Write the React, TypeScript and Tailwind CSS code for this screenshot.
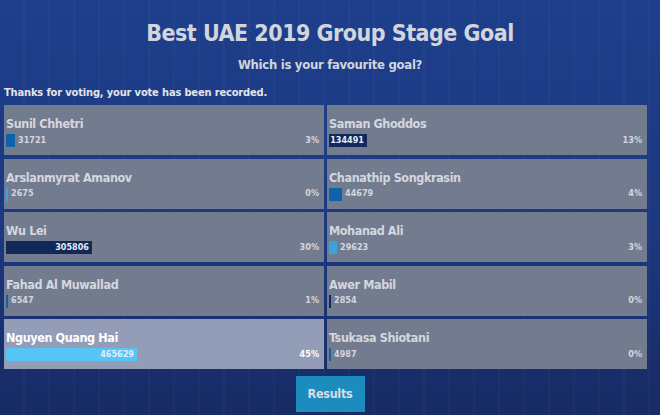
const FONT = { fontFamily: '"DejaVu Sans Condensed", "DejaVu Sans", sans-serif', fontStretch: "condensed" } as const;

type Entry = { name: string; votes: number; color: string; active?: boolean };

const left: Entry[] = [
  { name: "Sunil Chhetri", votes: 31721, color: "bg-[#0c63a6]" },
  { name: "Arslanmyrat Amanov", votes: 2675, color: "bg-[#3aa3dc]" },
  { name: "Wu Lei", votes: 305806, color: "bg-[#10295a]" },
  { name: "Fahad Al Muwallad", votes: 6547, color: "bg-[#0c63a6]" },
  { name: "Nguyen Quang Hai", votes: 465629, color: "bg-[#55c6f5]", active: true },
];

const right: Entry[] = [
  { name: "Saman Ghoddos", votes: 134491, color: "bg-[#10295a]" },
  { name: "Chanathip Songkrasin", votes: 44679, color: "bg-[#0c63a6]" },
  { name: "Mohanad Ali", votes: 29623, color: "bg-[#3aa3dc]" },
  { name: "Awer Mabil", votes: 2854, color: "bg-[#10295a]" },
  { name: "Tsukasa Shiotani", votes: 4987, color: "bg-[#0c63a6]" },
];

const total = [...left, ...right].reduce((s, e) => s + e.votes, 0);
const TRACK = 290;

function Card({ e }: { e: Entry }) {
  const pct = e.votes / total;
  const w = Math.max(2, Math.round(pct * TRACK));
  const inside = w > 34;
  return (
    <div
      className={`h-[50px] px-[2px] pt-[11px] ${
        e.active ? "bg-[#949db7] text-white" : "bg-[#737b8f] text-[#d3d7df]"
      }`}
    >
      <div className="text-[12.5px] font-bold leading-4 tracking-[-0.4px]">{e.name}</div>
      <div className="mt-[2px] flex h-[13px] items-center pr-[3px]">
        <div
          className={`flex h-[13px] shrink-0 items-center justify-end ${e.color}`}
          style={{ width: w }}
        >
          {inside && (
            <span className="pr-[3px] text-[9px] font-bold text-[#e6ecf4]">{e.votes}</span>
          )}
        </div>
        {!inside && <span className="pl-[3px] text-[9px] font-bold">{e.votes}</span>}
        <span className="ml-auto text-[9px] font-bold">{Math.round(pct * 100)}%</span>
      </div>
    </div>
  );
}

export default function App() {
  return (
    <div
      className="h-[415px] w-[660px] overflow-hidden bg-[repeating-linear-gradient(90deg,transparent_0px,transparent_23px,rgba(255,255,255,0.025)_23px,rgba(255,255,255,0.025)_25px),linear-gradient(180deg,#1e3f8c_0%,#1c3880_55%,#172b64_100%)]"
      style={FONT}
    >
      <h1 className="pt-[19px] text-center text-[23px] font-bold leading-[28px] tracking-[-0.5px] text-[#d2d5dc]">
        Best UAE 2019 Group Stage Goal
      </h1>
      <p className="mt-[9px] text-center text-[13px] font-bold leading-[18px] tracking-[-0.3px] text-[#d2d5dc]">
        Which is your favourite goal?
      </p>
      <p className="mt-[11px] pl-[4px] text-[11px] font-bold leading-[16px] tracking-[-0.15px] text-[#e2e5ea]">
        Thanks for voting, your vote has been recorded.
      </p>
      <div className="ml-[4px] mt-[4px] grid w-[643px] grid-cols-2 gap-x-[3px]">
        <div className="flex flex-col gap-[3.5px]">
          {left.map((e) => (
            <Card key={e.name} e={e} />
          ))}
        </div>
        <div className="flex flex-col gap-[3.5px]">
          {right.map((e) => (
            <Card key={e.name} e={e} />
          ))}
        </div>
      </div>
      <div className="mt-[7px] flex justify-center">
        <button className="h-[36px] w-[69px] bg-[#1c8bbd] text-[12.5px] font-bold tracking-[-0.3px] text-[#d5dee8]">
          Results
        </button>
      </div>
    </div>
  );
}
